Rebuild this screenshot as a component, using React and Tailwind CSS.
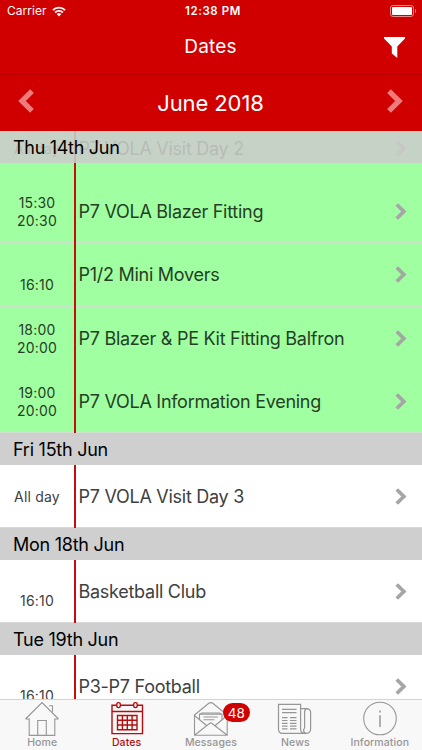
import React from "react";

const days = [
  {
    title: "Thu 14th Jun",
    highlighted: true,
    events: [
      { start: "15:30", end: "20:30", name: "P7 VOLA Blazer Fitting" },
      { start: "", end: "16:10", name: "P1/2 Mini Movers", tall: true },
      { start: "18:00", end: "20:00", name: "P7 Blazer & PE Kit Fitting Balfron" },
      { start: "19:00", end: "20:00", name: "P7 VOLA Information Evening" },
    ],
  },
  {
    title: "Fri 15th Jun",
    events: [{ allDay: true, name: "P7 VOLA Visit Day 3" }],
  },
  {
    title: "Mon 18th Jun",
    events: [{ start: "", end: "16:10", name: "Basketball Club" }],
  },
  {
    title: "Tue 19th Jun",
    events: [{ start: "", end: "16:10", name: "P3-P7 Football" }],
  },
];

const Chevron = ({ className, left }) => (
  <svg viewBox="0 0 12 18" className={className} fill="none" stroke="currentColor" strokeWidth="4">
    <path d={left ? "M10.5 1.6 3 9l7.5 7.4" : "M1.5 1.6 9 9l-7.5 7.4"} />
  </svg>
);

const StatusBar = () => (
  <div className="grid h-[22px] grid-cols-[1fr_auto_1fr] items-center pl-[7px] pr-[5px] text-[12px] leading-none">
    <div className="flex items-center gap-[5px]">
      <span className="tracking-[0.05px]">Carrier</span>
      <svg viewBox="0 0 14 11" className="h-[11px] w-[14px]" fill="none" stroke="currentColor" strokeWidth="1.9">
        <path d="M.9 4.1a8.7 8.7 0 0 1 12.2 0M3.1 6.5a5.5 5.5 0 0 1 7.8 0" />
        <path d="M4.7 8.1a3.3 3.3 0 0 1 4.6 0L7 10.6z" fill="currentColor" stroke="none" />
      </svg>
    </div>
    <span className="pt-[1px] pl-[2px] text-center text-[11.5px] font-semibold tracking-[0.6px]">12:38 PM</span>
    <svg viewBox="0 0 27 12" className="h-[12px] w-[27px] justify-self-end">
      <rect x=".5" y=".5" width="23" height="11" rx="2.6" fill="none" stroke="#f08a8a" />
      <rect x="2" y="2" width="20" height="8" rx="1" fill="white" />
      <path d="M25 4v4c1.6-.5 1.6-3.5 0-4z" fill="#f08a8a" />
    </svg>
  </div>
);

const DayHeader = ({ title }) => (
  <div className="flex h-[32px] shrink-0 items-center bg-[#cfcfcf] pl-[13px] text-[18px] tracking-[-0.25px] text-black">
    {title}
  </div>
);

const EventRow = ({ event, highlighted }) => (
  <div
    className={`flex shrink-0 ${event.tall ? "h-[64px]" : "h-[63px]"} ${
      highlighted ? "bg-[#a0ffa0] text-[#264026]" : "bg-white text-[#404040]"
    }`}
  >
    <div
      className={`flex w-[74px] flex-col items-center justify-center border-b pt-[2px] text-[14px] leading-[18px] tracking-[0.2px] ${
        highlighted ? "border-[#cfe0cf]" : "border-[#d8d8d8]"
      }`}
    >
      {event.allDay ? (
        <span>All day</span>
      ) : (
        <>
          <span className="h-[18px]">{event.start}</span>
          <span className="h-[18px]">{event.end}</span>
        </>
      )}
    </div>
    <div className="w-[2px] bg-[#c80c0c]" />
    <div
      className={`flex flex-1 items-center justify-between border-b pl-[2.5px] pr-[15px] ${
        highlighted ? "border-[#cfe0cf]" : "border-[#d8d8d8]"
      }`}
    >
      <span className="whitespace-nowrap text-[18px] tracking-[-0.27px]">{event.name}</span>
      <Chevron className="h-[17px] w-[12px] text-[#a6a6a6]" />
    </div>
  </div>
);

const HomeIcon = () => (
  <svg viewBox="0 0 36 36" className="h-[36px] w-[36px]" fill="none" stroke="currentColor" strokeWidth="1.1">
    <path d="M1.5 19 18 2.5 34.5 19M1.5 19h3.7v16.4h25.6V19h3.7M13.7 35V20.5h8.6V35M25 5.7h3.5v6" />
  </svg>
);

const DatesIcon = () => (
  <svg viewBox="0 0 36 36" className="h-[36px] w-[36px]" fill="none" stroke="currentColor" strokeWidth="1.4">
    <path d="M7.8 5.3H3v28.3h30.5V5.3h-5.3M24.7 5.3H11.3M3 11.5h30.5" />
    <rect x="7.8" y="2.6" width="3.5" height="5" rx="1.5" />
    <rect x="24.7" y="2.6" width="3.5" height="5" rx="1.5" />
    <path d="M8.5 15.5h19.5v14.2H8.5zM8.5 20.2H28M8.5 25H28M13.4 15.5v14.2M18.3 15.5v14.2M23.1 15.5v14.2" />
  </svg>
);

const MessagesIcon = () => (
  <svg viewBox="0 0 36 36" className="h-[36px] w-[36px]" fill="none" stroke="currentColor" strokeWidth="1.1">
    <path d="M1.5 15 15.8 3.3q2-1.3 4 0L34.2 15v20.2H1.5zM1.5 15.5l12 10M34.2 15.5l-12 10M1.5 35.2l15.3-12q1-.6 2 0l15.4 12" />
    <path d="M6.5 19.5v-5.2H29v5.2M10.5 17h14.5M10.5 19.7h11M6.5 14.3l2.5-1.3h17.5l2.5 1.3" />
  </svg>
);

const NewsIcon = () => (
  <svg viewBox="0 0 36 36" className="h-[36px] w-[36px]" fill="none" stroke="currentColor" strokeWidth="1.2">
    <path d="M23.6 29V4.3H1.5v25.5a3.5 3.5 0 0 0 3.5 3.5h24.5" />
    <path d="M23.6 8.7h6.5a3.5 3.5 0 0 1 3.5 3.5v17a4 4 0 0 1-4 4.1q-3 0-3-3.5l1-2V11.5q.3-2.5 2.5-2.8M23.6 29q0 4 3.5 4.3" />
    <path d="M5 9.3h14.5M5 12.6h14.5M5 17.7h5.5M5 20.5h5.5M5 23.3h5.5M5 26.1h5.5M5 28.9h5.5M13 17.7h6.5M13 20.5h6.5M13 23.3h6.5M13 26.1h6.5M13 28.9h6.5" />
  </svg>
);

const InfoIcon = () => (
  <svg viewBox="0 0 36 36" className="h-[36px] w-[36px]" fill="none" stroke="currentColor" strokeWidth="1.1">
    <circle cx="18" cy="18.5" r="16.3" />
    <path d="M18 15.3v11.7M18 10.5v2" strokeWidth="1.5" />
  </svg>
);

const tabs = [
  { label: "Home", icon: HomeIcon },
  { label: "Dates", icon: DatesIcon, active: true },
  { label: "Messages", icon: MessagesIcon, badge: 48 },
  { label: "News", icon: NewsIcon },
  { label: "Information", icon: InfoIcon },
];

const App = () => {
  return (
    <div className="flex h-[750px] w-[422px] flex-col overflow-hidden bg-white font-['Inter','Liberation_Sans',sans-serif]">
      {/* Status bar and title */}
      <header className="h-[75px] shrink-0 border-b border-[#bd0000] bg-[#d00000] text-white">
        <StatusBar />
        <div className="grid h-[50px] grid-cols-3 items-center pr-[17px]">
          <span />
          <h1 className="pl-[16px] text-center text-[19px] tracking-[0.2px]">Dates</h1>
          <svg viewBox="0 0 21 21" className="h-[21px] w-[21px] justify-self-end" fill="currentColor">
            <path d="M0 0h21v1.5L13.3 9.5V21L7.8 16.5v-7L0 1.5z" />
          </svg>
        </div>
      </header>

      {/* Month switcher */}
      <div className="flex h-[56px] shrink-0 items-center justify-between bg-[#d00000] pl-[18px] pr-[19px] text-white">
        <Chevron left className="mb-[4px] h-[24px] w-[16px] text-[#ee7c7c]" />
        <h2 className="text-[22px] tracking-[-0.1px]">June 2018</h2>
        <Chevron className="mb-[4px] h-[24px] w-[16px] text-[#ee7c7c]" />
      </div>

      {/* Event list */}
      <main className="relative flex flex-1 flex-col overflow-hidden">
        <div className="mt-[-14px] flex flex-col">
          <EventRow highlighted event={{ allDay: true, name: "P7 VOLA Visit Day 2" }} />
          {days.map((day, index) => (
            <React.Fragment key={day.title}>
              {index > 0 && <DayHeader title={day.title} />}
              {day.events.map((event) => (
                <EventRow key={event.name} event={event} highlighted={day.highlighted} />
              ))}
            </React.Fragment>
          ))}
        </div>
        {/* Pinned header of the current day */}
        <div className="absolute inset-x-0 top-0 flex h-[32px] items-center bg-[#cccccc]/88 pl-[13px] text-[18px] tracking-[-0.3px] text-black">
          {days[0].title}
        </div>
      </main>

      {/* Tab bar */}
      <nav className="grid h-[51px] shrink-0 grid-cols-5 border-t border-[#d4d4d4] bg-[#f8f8f8]">
        {tabs.map(({ label, icon: Icon, active, badge }) => (
          <div
            key={label}
            className={`relative flex flex-col items-center gap-[1px] text-[10.5px] font-medium leading-[12px] tracking-[0.1px] ${
              active ? "text-[#b50d0d]" : "text-[#969696]"
            }`}
          >
            <Icon />
            <span>{label}</span>
            {badge && (
              <span className="absolute left-[54px] top-[3px] flex h-[19px] w-[27px] items-center justify-center rounded-full bg-[#d00000] text-[13.5px] font-normal text-white">
                {badge}
              </span>
            )}
          </div>
        ))}
      </nav>
    </div>
  );
};

export default App;
